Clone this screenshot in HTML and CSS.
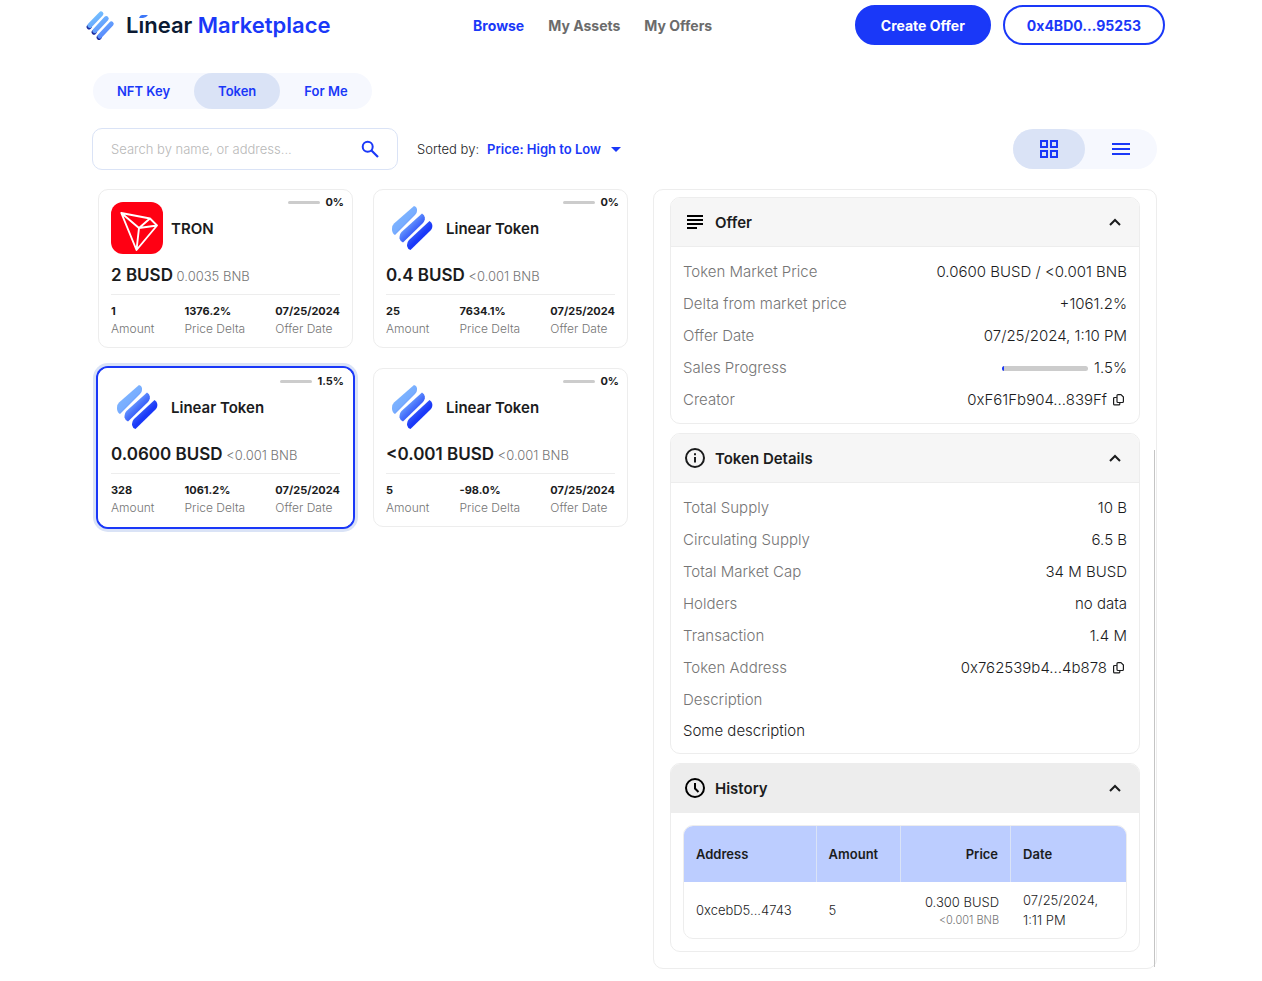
FILE: index.html
```html
<!DOCTYPE html>
<html lang="en">
<head>
<meta charset="utf-8">
<meta name="viewport" content="width=device-width, initial-scale=1">
<title>Linear Marketplace</title>
<link rel="stylesheet" href="styles.css">
</head>
<body>
<svg class="sprite" aria-hidden="true">
  <defs>
    <linearGradient id="token-fill" gradientUnits="userSpaceOnUse" x1="12" y1="14" x2="36" y2="38">
      <stop offset="0" stop-color="#7db4ff"/>
      <stop offset="0.28" stop-color="#78adff"/>
      <stop offset="0.55" stop-color="#4a74fb"/>
      <stop offset="0.9" stop-color="#1a38f8"/>
    </linearGradient>
    <linearGradient id="brand-fill" gradientUnits="userSpaceOnUse" x1="8" y1="3" x2="22" y2="28">
      <stop offset="0" stop-color="#76c4ff"/>
      <stop offset="1" stop-color="#5685fc"/>
    </linearGradient>
    <symbol id="i-token" viewBox="0 0 52 52">
      <g fill="url(#token-fill)">
        <path d="M6 26.500Q6 23.500 8 21.500L28 4Q30.500 4.500 31 7V9Q31 11 29 13L9 33Q6.500 32 6 28Z"/>
        <path d="M13.500 35Q13.500 32 15.500 30L36 11.500Q38.500 13 38.800 15.500V17.500Q38.500 19 37 21L17 40.500Q14 39 13.500 36.500Z"/>
        <path d="M21 43Q21 40 23 38L43.500 19Q46 20.500 46.300 23V25Q46 27 44.500 28.500L24.500 48Q21.500 47 21 44Z"/>
      </g>
    </symbol>
    <symbol id="i-chevron" viewBox="0 0 14 10">
      <path d="M2 8l5-5 5 5" fill="none" stroke="currentColor" stroke-width="2"/>
    </symbol>
    <symbol id="i-copy" viewBox="0 0 14 14">
      <g fill="none" stroke="currentColor" stroke-width="1.200" stroke-linejoin="round">
        <path d="M6 1.600h3l2.400 2.400v4.500a1 1 0 0 1-1 1H6a1 1 0 0 1-1-1V2.600a1 1 0 0 1 1-1z"/>
        <path d="M4.800 4.500H2.600a1 1 0 0 0-1 1v5.400a1 1 0 0 0 1 1h4.200a1 1 0 0 0 1-1V9.700"/>
      </g>
    </symbol>
  </defs>
</svg>

<header class="header">
  <a class="brand" href="#" aria-label="Linear Marketplace">
    <svg class="brand-mark" viewBox="0 0 30 32" aria-hidden="true">
      <g stroke-linecap="round" stroke-width="4.800">
        <path d="M3 18L3.500 17.500M8 23.200L8.500 22.700M13 28.500L13.500 28" stroke="#1b2a9c"/>
        <path d="M3.800 16.500L15 4.800M8.800 21.800L20.300 9.500M13.800 27.200L25.300 14.800" stroke="url(#brand-fill)"/>
      </g>
    </svg>
    <span class="brand-name"><span class="brand-first">Lınear<svg class="brand-accent" viewBox="0 0 9 3" aria-hidden="true"><path d="M3 0h6Q7 3 4 3H0Q1 0 3 0z" fill="#3d77f8"/></svg></span> Marketplace</span>
  </a>
  <nav class="nav">
    <a class="nav-link active" href="#">Browse</a>
    <a class="nav-link" href="#">My Assets</a>
    <a class="nav-link" href="#">My Offers</a>
  </nav>
  <div class="actions">
    <button class="btn btn-primary" type="button">Create Offer</button>
    <button class="btn btn-outline" type="button">0x4BD0...95253</button>
  </div>
</header>

<main class="main">
  <div class="tabs">
    <button class="tab" type="button">NFT Key</button>
    <button class="tab active" type="button">Token</button>
    <button class="tab" type="button">For Me</button>
  </div>

  <div class="toolbar">
    <label class="search">
      <input class="search-input" type="search" placeholder="Search by name, or address..." aria-label="Search by name, or address">
      <svg class="search-icon" viewBox="0 0 18 18" aria-hidden="true"><circle cx="6.700" cy="6.700" r="5" fill="none" stroke="currentColor" stroke-width="2"/><path d="M10.500 10.500L17 17" stroke="currentColor" stroke-width="2.200"/></svg>
    </label>
    <div class="sort">
      <label for="sort">Sorted by:</label>
      <div class="sort-box">
        <select class="sort-select" id="sort"><option>Price: High to Low</option></select>
        <svg class="sort-arrow" viewBox="0 0 10 5" aria-hidden="true"><path d="M0 0h10L5 5z" fill="currentColor"/></svg>
      </div>
    </div>
    <div class="view">
      <button class="view-btn active" type="button" aria-label="Grid view">
        <svg class="view-icon" viewBox="0 0 18 18" fill="none" stroke="currentColor" stroke-width="2"><path d="M1 1h6v6H1zM11 1h6v6h-6zM1 11h6v6H1zM11 11h6v6h-6z"/></svg>
      </button>
      <button class="view-btn" type="button" aria-label="List view">
        <svg class="view-icon" viewBox="0 0 18 18" fill="none" stroke="currentColor" stroke-width="2"><path d="M0 4h18M0 9h18M0 14h18"/></svg>
      </button>
    </div>
  </div>

  <div class="content">
    <section class="cards">
      <article class="card">
        <div class="card-sold"><span class="card-bar"></span>0%</div>
        <div class="card-head">
          <svg class="card-logo" viewBox="0 0 52 52" aria-hidden="true"><rect width="52" height="52" rx="12" fill="#ff0013"/><path d="M10.300 11L39 16.500L46 23.500L25.500 48zM10.300 11L28 26L25.500 48M28 26L46 23.500M28 26L39 16.500" fill="none" stroke="#fff" stroke-width="1.900" stroke-linejoin="round"/></svg>
          <h2 class="card-title">TRON</h2>
        </div>
        <p class="card-price"><b>2 BUSD</b> 0.0035 BNB</p>
        <dl class="stats">
          <div><dd>1</dd><dt>Amount</dt></div>
          <div><dd>1376.2%</dd><dt>Price Delta</dt></div>
          <div><dd>07/25/2024</dd><dt>Offer Date</dt></div>
        </dl>
      </article>
      <article class="card">
        <div class="card-sold"><span class="card-bar"></span>0%</div>
        <div class="card-head">
          <svg class="card-logo" aria-hidden="true"><use href="#i-token"/></svg>
          <h2 class="card-title">Linear Token</h2>
        </div>
        <p class="card-price"><b>0.4 BUSD</b> &lt;0.001 BNB</p>
        <dl class="stats">
          <div><dd>25</dd><dt>Amount</dt></div>
          <div><dd>7634.1%</dd><dt>Price Delta</dt></div>
          <div><dd>07/25/2024</dd><dt>Offer Date</dt></div>
        </dl>
      </article>
      <article class="card selected">
        <div class="card-sold"><span class="card-bar"></span>1.5%</div>
        <div class="card-head">
          <svg class="card-logo" aria-hidden="true"><use href="#i-token"/></svg>
          <h2 class="card-title">Linear Token</h2>
        </div>
        <p class="card-price"><b>0.0600 BUSD</b> &lt;0.001 BNB</p>
        <dl class="stats">
          <div><dd>328</dd><dt>Amount</dt></div>
          <div><dd>1061.2%</dd><dt>Price Delta</dt></div>
          <div><dd>07/25/2024</dd><dt>Offer Date</dt></div>
        </dl>
      </article>
      <article class="card">
        <div class="card-sold"><span class="card-bar"></span>0%</div>
        <div class="card-head">
          <svg class="card-logo" aria-hidden="true"><use href="#i-token"/></svg>
          <h2 class="card-title">Linear Token</h2>
        </div>
        <p class="card-price"><b>&lt;0.001 BUSD</b> &lt;0.001 BNB</p>
        <dl class="stats">
          <div><dd>5</dd><dt>Amount</dt></div>
          <div><dd>-98.0%</dd><dt>Price Delta</dt></div>
          <div><dd>07/25/2024</dd><dt>Offer Date</dt></div>
        </dl>
      </article>
    </section>

    <aside class="panel">
      <section class="box">
        <button class="box-head" type="button">
          <svg class="box-icon" viewBox="0 0 24 24" fill="none" stroke="#000" stroke-width="2" aria-hidden="true"><path d="M4 6h16M4 10h16M4 14h16M4 18h10"/></svg>
          <span class="box-title">Offer</span>
          <svg class="chevron" aria-hidden="true"><use href="#i-chevron"/></svg>
        </button>
        <dl class="rows">
          <div class="row"><dt>Token Market Price</dt><dd>0.0600 BUSD / &lt;0.001 BNB</dd></div>
          <div class="row"><dt>Delta from market price</dt><dd>+1061.2%</dd></div>
          <div class="row"><dt>Offer Date</dt><dd>07/25/2024, 1:10 PM</dd></div>
          <div class="row"><dt>Sales Progress</dt><dd><span class="progress"><span class="progress-fill"></span></span>1.5%</dd></div>
          <div class="row"><dt>Creator</dt><dd>0xF61Fb904...839Ff<button class="copy" type="button" aria-label="Copy creator address"><svg class="copy-icon"><use href="#i-copy"/></svg></button></dd></div>
        </dl>
      </section>

      <section class="box">
        <button class="box-head" type="button">
          <svg class="box-icon" viewBox="0 0 24 24" fill="none" stroke="currentColor" stroke-width="2" aria-hidden="true"><circle cx="12" cy="12" r="9"/><path d="M12 11v5.500M12 7.300v1.900"/></svg>
          <span class="box-title">Token Details</span>
          <svg class="chevron" aria-hidden="true"><use href="#i-chevron"/></svg>
        </button>
        <dl class="rows">
          <div class="row"><dt>Total Supply</dt><dd>10 B</dd></div>
          <div class="row"><dt>Circulating Supply</dt><dd>6.5 B</dd></div>
          <div class="row"><dt>Total Market Cap</dt><dd>34 M BUSD</dd></div>
          <div class="row"><dt>Holders</dt><dd>no data</dd></div>
          <div class="row"><dt>Transaction</dt><dd>1.4 M</dd></div>
          <div class="row"><dt>Token Address</dt><dd>0x762539b4...4b878<button class="copy" type="button" aria-label="Copy token address"><svg class="copy-icon"><use href="#i-copy"/></svg></button></dd></div>
          <div class="row row-stacked"><dt>Description</dt><dd>Some description</dd></div>
        </dl>
      </section>

      <section class="box">
        <button class="box-head hovered" type="button">
          <svg class="box-icon" viewBox="0 0 24 24" fill="none" stroke="#000" stroke-width="2" aria-hidden="true"><circle cx="12" cy="12" r="9"/><path d="M12 7v5.500l3.500 3.500"/></svg>
          <span class="box-title">History</span>
          <svg class="chevron" aria-hidden="true"><use href="#i-chevron"/></svg>
        </button>
        <div class="history">
          <table class="table">
            <thead>
              <tr><th class="col-address">Address</th><th class="col-amount">Amount</th><th class="col-price">Price</th><th class="col-date">Date</th></tr>
            </thead>
            <tbody>
              <tr><td>0xcebD5...4743</td><td>5</td><td class="col-price">0.300 BUSD<small>&lt;0.001 BNB</small></td><td>07/25/2024, 1:11 PM</td></tr>
            </tbody>
          </table>
        </div>
      </section>
      <div class="scroll-thumb"></div>
    </aside>
  </div>
</main>
</body>
</html>
```
FILE: styles.css
```css
* { box-sizing: border-box; }

body {
  margin: 0;
  background: #fff;
  color: #1b1c1d;
  font-family: Inter, "Liberation Sans", sans-serif;
  font-size: 15px;
  font-weight: 300;
}

button, input, select { font: inherit; color: inherit; }
button { border: 0; padding: 0; background: none; cursor: pointer; }
a { color: inherit; text-decoration: none; }
h2, p, dl, dd { margin: 0; }
svg { display: block; flex: none; }
.sprite { position: absolute; width: 0; height: 0; }

/* Header */
.header {
  display: flex;
  align-items: center;
  justify-content: space-between;
  padding: 5px 97px 0 86px;
}
.brand { display: flex; align-items: center; gap: 10px; }
.brand-mark { width: 30px; height: 32px; }
.brand-name { color: #1a38f8; font-size: 22px; font-weight: 600; line-height: 32px; white-space: nowrap; }
.brand-first { position: relative; color: #0b1a33; }
.brand-accent { position: absolute; left: 13px; top: 3px; width: 9px; height: 3px; }
.nav { display: flex; gap: 24px; font-size: 14px; font-weight: 700; color: #6b6b6b; white-space: nowrap; }
.nav-link.active { color: #1a38f8; }
.actions { display: flex; gap: 12px; }
.btn { height: 40px; padding: 0 22px; border: 2px solid #1a38f8; border-radius: 20px; font-size: 14px; font-weight: 700; white-space: nowrap; }
.btn-primary { padding: 0 24px; background: #1a38f8; color: #fff; }
.btn-outline { background: #fff; color: #1a38f8; }

/* Filters */
.main { padding: 28px 105px 12px 92px; }
.tabs { display: flex; width: fit-content; margin-left: 1px; border-radius: 18px; background: #f6f8fe; }
.tab { height: 36px; padding: 0 24px; border-radius: 18px; color: #1a38f8; font-size: 13px; font-weight: 600; }
.tab.active { background: #dae3f6; }

.toolbar { display: flex; align-items: center; margin-top: 19px; }
.search {
  display: flex;
  align-items: center;
  width: 306px;
  height: 42px;
  padding: 0 18px;
  border: 1px solid #dae3f6;
  border-radius: 10px;
}
.search-input { flex: 1; min-width: 0; padding: 0; border: 0; outline: 0; background: none; font-size: 13px; }
.search-input::placeholder { color: #b8b8b8; opacity: 1; }
.search-icon { width: 18px; height: 18px; color: #1a38f8; }
.sort { display: flex; align-items: center; gap: 8px; margin-left: 19px; font-size: 13px; }
.sort-box { position: relative; color: #1a38f8; }
.sort-select { appearance: none; padding: 0 20px 0 0; border: 0; background: none; font-weight: 600; }
.sort-arrow { position: absolute; right: 0; top: 6px; width: 10px; height: 5px; pointer-events: none; }
.view { display: flex; margin-left: auto; border-radius: 20px; background: #f6f8fe; color: #1a38f8; }
.view-btn { display: grid; place-items: center; width: 72px; height: 40px; border-radius: 20px; }
.view-btn.active { background: #dae3f6; }
.view-icon { width: 18px; height: 18px; }

/* Offer cards */
.content { display: grid; grid-template-columns: 530fr 504fr; gap: 25px; margin: 19px 0 0 6px; }
.cards { display: grid; grid-template-columns: 1fr 1fr; gap: 20px; align-content: start; }
.card { position: relative; padding: 12px 12px 10px; border: 1px solid #ededed; border-radius: 10px; }
.card.selected { border-color: #fff; box-shadow: 0 0 0 2px #1a38f8, 0 0 0 5px #dae3f6; }
.card-sold {
  position: absolute;
  top: 4px;
  right: 8px;
  display: flex;
  align-items: center;
  gap: 5px;
  font-size: 11px;
  font-weight: 700;
  line-height: 16px;
}
.card-bar { width: 32px; height: 3px; border-radius: 2px; background: #ccc; }
.card-head { display: flex; align-items: center; gap: 8px; }
.card-logo { width: 52px; height: 52px; }
.card-title { font-size: 15px; font-weight: 600; }
.card-price { padding: 9px 0 6px; border-bottom: 1px solid #ededed; color: #757575; font-size: 13px; line-height: 24px; white-space: nowrap; }
.card-price b { color: #1b1c1d; font-size: 17px; font-weight: 600; }
.stats { display: flex; justify-content: space-between; padding: 8px 0 0; font-size: 11px; line-height: 17px; }
.stats dd { font-weight: 700; }
.stats dt { color: #757575; font-size: 12px; }

/* Details panel */
.panel {
  position: relative;
  display: flex;
  flex-direction: column;
  gap: 9px;
  padding: 7px 16px 16px;
  border: 1px solid #ededed;
  border-radius: 10px;
}
.box { overflow: hidden; border: 1px solid #ededed; border-radius: 10px; }
.box-head {
  display: flex;
  align-items: center;
  gap: 8px;
  width: 100%;
  height: 49px;
  padding: 0 17px 0 12px;
  border-bottom: 1px solid #ededed;
  background: #f6f6f6;
}
.box-head.hovered { background: #ededed; }
.box-icon { width: 24px; height: 24px; }
.box-title { flex: 1; font-weight: 600; text-align: left; }
.chevron { width: 14px; height: 10px; }
.rows { padding: 9px 12px 7px; }
.row { display: flex; justify-content: space-between; line-height: 32px; white-space: nowrap; }
.row dt { color: #757575; }
.row dd { display: flex; align-items: center; }
.row-stacked { flex-direction: column; }
.row-stacked dd { line-height: 30px; }
.progress { width: 86px; height: 5px; margin-right: 6px; overflow: hidden; border-radius: 3px; background: #ccc; }
.progress-fill { display: block; width: 2px; height: 5px; background: #1a38f8; }
.copy { margin: 0 1px 0 5px; }
.copy-icon { width: 14px; height: 14px; }

.history { padding: 12px; }
.table {
  width: 100%;
  overflow: hidden;
  border: 1px solid #ededed;
  border-radius: 10px;
  border-spacing: 0;
  table-layout: fixed;
  font-size: 13px;
  line-height: 20px;
  text-align: left;
}
.table th { height: 56px; padding: 0 12px; border-right: 1px solid #dae3f6; background: #bccdff; font-weight: 600; }
.table th:last-child { border-right: 0; }
.table td { height: 56px; padding: 0 12px; }
.table .col-price { text-align: right; }
.col-address { width: 30%; }
.col-amount { width: 19%; }
th.col-price { width: 25%; }
.col-date { width: 26%; }
.table small { display: block; color: #757575; font-size: 11px; line-height: 16px; }

.scroll-thumb { position: absolute; right: 1px; top: 260px; bottom: 1px; width: 1px; background: #c4c4c4; }
```
